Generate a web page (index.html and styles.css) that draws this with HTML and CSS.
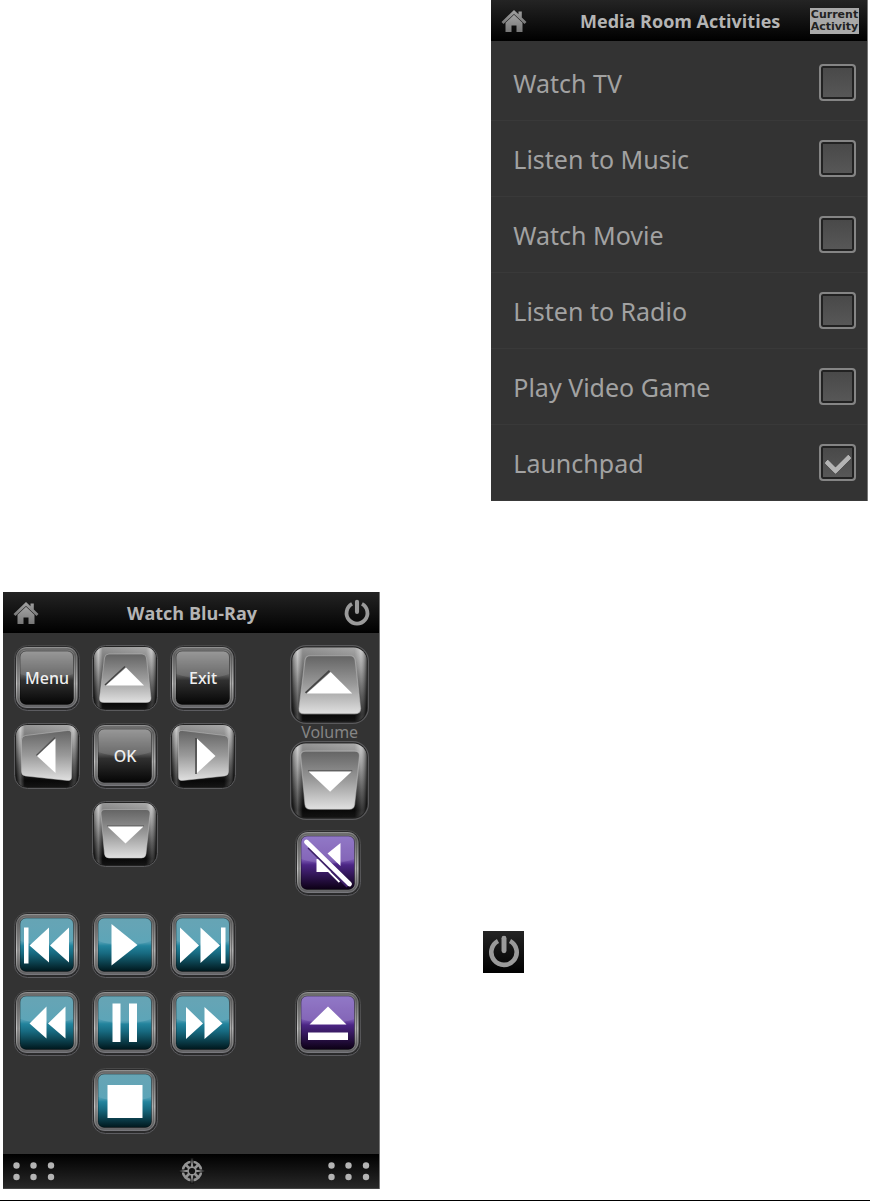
FILE: index.html
```html
<!DOCTYPE html>
<html lang="en">
<head>
    <meta charset="UTF-8">
    <meta name="viewport" content="width=device-width, initial-scale=1.0">
    <title>Media Room</title>
    <link rel="stylesheet" href="styles.css">
</head>
<body>
    <!-- shared key shapes and icons -->
    <svg class="defs" aria-hidden="true">
        <defs>
            <linearGradient id="ring" x1="0" y1="0" x2="0" y2="1">
                <stop offset="0" stop-color="#484848"/><stop offset="1" stop-color="#5c5c60"/>
            </linearGradient>
            <linearGradient id="bezel" x1="0" y1="0" x2="0" y2="1">
                <stop offset="0" stop-color="#929292"/><stop offset=".12" stop-color="#707070"/>
                <stop offset=".6" stop-color="#c4c4c4"/><stop offset=".85" stop-color="#858585"/>
                <stop offset="1" stop-color="#77777c"/>
            </linearGradient>
            <linearGradient id="black" x1="0" y1="0" x2="0" y2="1">
                <stop offset="0" stop-color="#8c8c8c"/><stop offset=".45" stop-color="#5c5c5c"/>
                <stop offset=".55" stop-color="#303030"/><stop offset="1" stop-color="#050505"/>
            </linearGradient>
            <linearGradient id="teal" x1="0" y1="0" x2="0" y2="1">
                <stop offset="0" stop-color="#5599ab"/><stop offset=".46" stop-color="#4a9ab0"/>
                <stop offset=".52" stop-color="#23849d"/><stop offset=".66" stop-color="#176a80"/>
                <stop offset="1" stop-color="#00171c"/>
            </linearGradient>
            <linearGradient id="purple" x1="0" y1="0" x2="0" y2="1">
                <stop offset="0" stop-color="#8468c0"/><stop offset=".45" stop-color="#7654b0"/>
                <stop offset=".54" stop-color="#4c2685"/><stop offset="1" stop-color="#0c0014"/>
            </linearGradient>
            <linearGradient id="base" x1="0" y1="0" x2="0" y2="1">
                <stop offset="0" stop-color="#c6c6c6"/><stop offset=".3" stop-color="#8c8c8c"/>
                <stop offset=".65" stop-color="#3c3c3c"/><stop offset=".9" stop-color="#0b0b0b"/>
                <stop offset="1" stop-color="#181818"/>
            </linearGradient>
            <linearGradient id="cap" x1="0" y1="0" x2="0" y2="1">
                <stop offset="0" stop-color="#646464"/><stop offset=".5" stop-color="#9a9a9a"/>
                <stop offset="1" stop-color="#e0e0e0"/>
            </linearGradient>
            <linearGradient id="side" x1="0" y1="0" x2="1" y2="0">
                <stop offset="0" stop-color="#000" stop-opacity=".3"/><stop offset=".07" stop-color="#fff" stop-opacity=".25"/>
                <stop offset=".14" stop-color="#000" stop-opacity=".25"/><stop offset=".84" stop-color="#000" stop-opacity=".15"/>
                <stop offset=".92" stop-color="#fff" stop-opacity=".15"/><stop offset="1" stop-color="#000" stop-opacity=".5"/>
            </linearGradient>
            <linearGradient id="home-fill" x1="0" y1="0" x2="0" y2="1">
                <stop offset="0" stop-color="#a2a2a2"/><stop offset="1" stop-color="#777"/>
            </linearGradient>

            <symbol id="frame" viewBox="0 0 66 66">
                <rect x=".5" y=".5" width="65" height="65" rx="13" fill="#2b2b2c" stroke="url(#ring)"/>
                <rect x="2" y="2" width="61.5" height="61" rx="11" fill="url(#bezel)"/>
                <rect x="4" y="4" width="57.5" height="57" rx="8" fill="none" stroke="#555" stroke-opacity=".7" stroke-width="1.5"/>
            </symbol>
            <symbol id="gloss" viewBox="0 0 66 66">
                <path d="M6 29V13q0-7 7-7h39.500q7 0 7 7v16Q33 38 6 29z" fill="#fff" opacity=".11"/>
                <rect x="6" y="6" width="53.5" height="53.5" rx="6" fill="none" stroke="#000" stroke-opacity=".4"/>
            </symbol>
            <symbol id="black-key" viewBox="0 0 66 66">
                <use href="#frame"/>
                <rect x="6" y="6" width="53.5" height="53.5" rx="6" fill="url(#black)"/>
                <use href="#gloss"/>
            </symbol>
            <symbol id="teal-key" viewBox="0 0 66 66">
                <use href="#frame"/>
                <rect x="6" y="6" width="53.5" height="53.5" rx="6" fill="url(#teal)"/>
                <use href="#gloss"/>
            </symbol>
            <symbol id="purple-key" viewBox="0 0 66 66">
                <use href="#frame"/>
                <rect x="6" y="6" width="53.5" height="53.5" rx="6" fill="url(#purple)"/>
                <use href="#gloss"/>
            </symbol>
            <symbol id="arrow-base" viewBox="0 0 66 66">
                <rect x=".5" y=".5" width="65" height="65" rx="13" fill="#222" stroke="#5a5a5c"/>
                <rect x="2" y="2" width="62" height="62" rx="11" fill="url(#base)"/>
                <rect x="2" y="2" width="62" height="62" rx="11" fill="url(#side)"/>
            </symbol>
            <symbol id="up-key" viewBox="0 0 66 66">
                <use href="#arrow-base"/>
                <path d="M17 9h33q4 0 4.500 4l4.500 40q0 4.500-5 4.500H12q-5 0-4.500-4.500L12.500 13q.5-4 4.500-4z" fill="url(#cap)" stroke="#c4c4c4" stroke-opacity=".5"/>
                <path d="M13 40L33 21.500" stroke="#444" stroke-width="1.500"/>
                <path d="M34 22.500L52 40.500H14z" fill="#fff"/>
            </symbol>
            <symbol id="down-key" viewBox="0 0 66 66">
                <use href="#arrow-base"/>
                <path d="M13 8.500h41q4.500 0 4 4.500l-4 40q-.5 4-4.500 4H17q-4 0-4.500-4L9 13q-.5-4.500 4-4.500z" fill="url(#cap)" stroke="#c4c4c4" stroke-opacity=".5"/>
                <path d="M15 25h37" stroke="#555"/>
                <path d="M15.500 25.500h36l-18 17z" fill="#fff"/>
            </symbol>
            <symbol id="left-key" viewBox="0 0 66 66">
                <use href="#arrow-base"/>
                <path d="M11.500 12.500L53.500 7.500q4-.5 4 3.500v43q0 4-4 3.500l-42-4.500q-4-.5-4-4.500V17q0-4 4-4.500z" fill="url(#cap)" stroke="#c4c4c4" stroke-opacity=".5"/>
                <path d="M22.500 32.500l18.500-18" stroke="#555" stroke-width="1.500"/>
                <path d="M23 33l18.500-17.500v34.500z" fill="#fff"/>
            </symbol>
            <symbol id="right-key" viewBox="0 0 66 66">
                <use href="#arrow-base"/>
                <path d="M12.500 7.500L54.500 12.500q4 .5 4 4.500v31.500q0 4-4 4.500l-42 4.500q-4 .5-4-3.500V11q0-4 4-3.500z" fill="url(#cap)" stroke="#c4c4c4" stroke-opacity=".5"/>
                <path d="M26 15v36" stroke="#444" stroke-width="1.500"/>
                <path d="M27 15.500l18.500 17.500L27 50z" fill="#fff"/>
            </symbol>
            <symbol id="home" viewBox="0 0 26 24">
                <path d="M13 1l4.500 4.200V2.500h3.300v6L25.500 13l-2 2L13 5 2.500 15l-2-2z" fill="url(#home-fill)"/>
                <path d="M13 5.800l8.500 8V23h-6v-6.500h-5V23h-6v-9.200z" fill="url(#home-fill)"/>
            </symbol>
            <symbol id="power" viewBox="0 0 26 26">
                <path d="M8.400 4.600a9.700 9.700 0 1 0 9.200 0" fill="none" stroke="#9a9a9a" stroke-width="3.500"/>
                <path d="M13 2.500v9.500" stroke="#9a9a9a" stroke-width="3.800" stroke-linecap="round"/>
            </symbol>
            <symbol id="dots" viewBox="0 0 42 19">
                <g fill="#b4b4b4">
                    <circle cx="3.500" cy="3.500" r="3.200"/><circle cx="20.500" cy="3.500" r="3.200"/><circle cx="38" cy="3.500" r="3.200"/>
                    <circle cx="3.500" cy="15" r="3.200"/><circle cx="20.500" cy="15" r="3.200"/><circle cx="38" cy="15" r="3.200"/>
                </g>
            </symbol>
        </defs>
    </svg>

    <main class="page">
        <section class="panel activities">
            <header class="title-bar">
                <a href="#" class="icon-link" aria-label="Home"><svg class="home"><use href="#home"/></svg></a>
                <h1>Media Room Activities</h1>
                <button class="current">Current<br>Activity</button>
            </header>
            <div class="activity-list">
                <label class="activity">Watch TV<input type="checkbox"></label>
                <label class="activity">Listen to Music<input type="checkbox"></label>
                <label class="activity">Watch Movie<input type="checkbox"></label>
                <label class="activity">Listen to Radio<input type="checkbox"></label>
                <label class="activity">Play Video Game<input type="checkbox"></label>
                <label class="activity">Launchpad<input type="checkbox" checked></label>
            </div>
        </section>

        <div class="lower">
            <section class="panel remote">
                <header class="title-bar">
                    <a href="#" class="icon-link" aria-label="Home"><svg class="home"><use href="#home"/></svg></a>
                    <h1>Watch Blu-Ray</h1>
                    <button class="power-btn" aria-label="Power"><svg class="power"><use href="#power"/></svg></button>
                </header>
                <div class="keys">
                    <div class="left-keys">
                        <div class="pad">
                            <button class="key"><svg viewBox="0 0 66 66"><use href="#black-key"/></svg><span>Menu</span></button>
                            <button class="key" aria-label="Up"><svg viewBox="0 0 66 66"><use href="#up-key"/></svg></button>
                            <button class="key"><svg viewBox="0 0 66 66"><use href="#black-key"/></svg><span>Exit</span></button>
                            <button class="key" aria-label="Left"><svg viewBox="0 0 66 66"><use href="#left-key"/></svg></button>
                            <button class="key"><svg viewBox="0 0 66 66"><use href="#black-key"/></svg><span>OK</span></button>
                            <button class="key" aria-label="Right"><svg viewBox="0 0 66 66"><use href="#right-key"/></svg></button>
                            <button class="key middle" aria-label="Down"><svg viewBox="0 0 66 66"><use href="#down-key"/></svg></button>
                        </div>
                        <div class="pad">
                            <button class="key" aria-label="Previous"><svg viewBox="0 0 66 66"><use href="#teal-key"/><path class="glyph" d="M10 15.500h4.500v36H10zM15.500 33.500l19.500-18v35zM36 33.500l19-18v35z"/></svg></button>
                            <button class="key" aria-label="Play"><svg viewBox="0 0 66 66"><use href="#teal-key"/><path class="glyph" d="M19.500 12l26 21-26 20.500z"/></svg></button>
                            <button class="key" aria-label="Next"><svg viewBox="0 0 66 66"><use href="#teal-key"/><path class="glyph" d="M10 15.500l19 18-19 17.500zM30.500 15.500l19.500 18-19.500 17.500zM51 15.500h4.500v36H51z"/></svg></button>
                            <button class="key" aria-label="Rewind"><svg viewBox="0 0 66 66"><use href="#teal-key"/><path class="glyph" d="M15.500 33.500l17-17v32zM34 33.500l17.500-17v32z"/></svg></button>
                            <button class="key" aria-label="Pause"><svg viewBox="0 0 66 66"><use href="#teal-key"/><path class="glyph" d="M20.500 13.500h8v38.500h-8zM37 13.500h8v38.500h-8z"/></svg></button>
                            <button class="key" aria-label="Fast forward"><svg viewBox="0 0 66 66"><use href="#teal-key"/><path class="glyph" d="M16 17l17 16.500-17 15.500zM34.500 17l18 16.500-18 15.500z"/></svg></button>
                            <button class="key middle" aria-label="Stop"><svg viewBox="0 0 66 66"><use href="#teal-key"/><path class="glyph" d="M15.500 17h35v33h-35z"/></svg></button>
                        </div>
                    </div>
                    <div class="right-keys">
                        <button class="key big" aria-label="Volume up"><svg viewBox="0 0 66 66"><use href="#up-key"/></svg></button>
                        <span class="volume">Volume</span>
                        <button class="key big" aria-label="Volume down"><svg viewBox="0 0 66 66"><use href="#down-key"/></svg></button>
                        <button class="key mute" aria-label="Mute"><svg viewBox="0 0 66 66"><use href="#purple-key"/><path class="glyph" d="M45.500 13v23L32.500 23.500zM21.500 29h4l13.500 13H21.500z"/><path d="M33 40.500l11.500 11.500" stroke="#fff" stroke-width="2"/><path d="M14 17l39 39" stroke="#3d2068" stroke-width="4"/><path d="M11.500 12l43 42" stroke="#fff" stroke-width="4.800" stroke-linecap="round"/></svg></button>
                        <button class="key eject" aria-label="Eject"><svg viewBox="0 0 66 66"><use href="#purple-key"/><path class="glyph" d="M33 16.500l18.500 18h-37zM13 42.500h40v7.500H13z"/></svg></button>
                    </div>
                </div>
                <footer class="bottom-bar">
                    <svg class="dots"><use href="#dots"/></svg>
                    <svg class="compass" viewBox="0 0 26 26" fill="none" stroke="#949494">
                        <circle cx="13" cy="13" r="9.200" stroke-width="2.500"/>
                        <circle cx="13" cy="13" r="4" stroke-width="1.800"/>
                        <path d="M7 7l3.500 3.500M19 7l-3.500 3.500M7 19l3.500-3.500M19 19l-3.500-3.500" stroke-width="2.500"/>
                        <path d="M13 0v9M13 17v9M0 13h9M17 13h9" stroke="#111" stroke-width="3"/>
                        <path d="M13 0l1.300 9h-2.600zM13 26l1.300-9h-2.600zM0 13l9-1.300v2.600zM26 13l-9-1.300v2.600z" fill="#949494" stroke="none"/>
                    </svg>
                    <svg class="dots"><use href="#dots"/></svg>
                </footer>
            </section>
            <button class="power-tile" aria-label="Power"><svg class="power"><use href="#power"/></svg></button>
        </div>
    </main>
</body>
</html>
```
FILE: styles.css
```css
* {
    box-sizing: border-box;
}
body {
    margin: 0;
    background-color: #fff;
    font-family: "Noto Sans", "Open Sans", sans-serif;
}
button {
    padding: 0;
    border: none;
    background: none;
    font-family: inherit;
    cursor: pointer;
}
svg {
    display: block;
}
.defs {
    position: absolute;
    width: 0;
    height: 0;
}
.page {
    display: flex;
    flex-direction: column;
    gap: 92px;
    padding-bottom: 11px;
    border-bottom: 1px solid #000;
}
.panel {
    background-color: #333;
    border-right: 1px solid #777;
}
.activities {
    width: 43.3%;
    margin-left: auto;
    margin-right: 2px;
}
.title-bar {
    display: grid;
    grid-template-columns: 1fr auto 1fr;
    align-items: center;
    height: 41px;
    padding: 0 8px 0 10px;
    background: linear-gradient(#242424, #000);
}
.title-bar h1 {
    margin: 0;
    color: #b4b4b4;
    font-family: "Open Sans", sans-serif;
    font-size: 18px;
    font-weight: 700;
}
.title-bar button {
    justify-self: end;
}
.home {
    width: 26px;
    height: 24px;
}
.power {
    width: 28px;
    height: 28px;
}
.current {
    width: 49px;
    height: 26px;
    background-color: #a8a8a8;
    color: #222;
    font-family: "DejaVu Sans", sans-serif;
    font-size: 11px;
    font-weight: bold;
    line-height: 12px;
    display: flex;
    align-items: center;
    justify-content: center;
}
.activity-list {
    padding-top: 4px;
}
.activity {
    display: flex;
    align-items: center;
    justify-content: space-between;
    height: 76px;
    padding: 0 11px 0 22px;
    border-bottom: 1px solid #393939;
    color: #a2a2a2;
    font-size: 25px;
}
.activity input {
    appearance: none;
    display: grid;
    place-items: center;
    width: 37px;
    height: 37px;
    margin: 0;
    border: 2px solid #858585;
    border-radius: 4px;
    background: linear-gradient(#484848, #585858);
    box-shadow: inset 0 0 0 2px #222;
}
.activity input:checked::before {
    content: "";
    width: 11px;
    height: 18px;
    margin-bottom: 5px;
    border-right: 5px solid #b4b4b4;
    border-bottom: 5px solid #b4b4b4;
    border-radius: 2px;
    transform: rotate(45deg);
}
.lower {
    display: flex;
    align-items: flex-start;
    gap: 103px;
    padding-left: 3px;
    margin-top: -1px;
}
.remote {
    width: 43.5%;
}
.keys {
    display: flex;
    justify-content: space-between;
    padding: 12px 10px 20px 11px;
}
.left-keys {
    display: flex;
    flex-direction: column;
    gap: 45px;
}
.pad {
    display: grid;
    grid-template-columns: repeat(3, 66px);
    gap: 12px;
}
.key {
    display: grid;
    place-items: center;
    width: 66px;
    height: 66px;
    color: #f0f0f0;
    font-size: 16px;
    font-weight: 500;
}
.key svg,
.key span {
    grid-area: 1 / 1;
}
.key svg {
    width: 100%;
    height: 100%;
}
.middle {
    grid-column: 2;
}
.glyph {
    fill: #fff;
}
.right-keys {
    display: flex;
    flex-direction: column;
    align-items: center;
}
.big {
    width: 79px;
    height: 79px;
}
.volume {
    color: #858585;
    font-size: 16px;
    line-height: 17px;
}
.mute,
.eject {
    margin-right: 3px;
}
.mute {
    margin-top: 10px;
}
.eject {
    margin-top: auto;
    margin-bottom: 78px;
}
.bottom-bar {
    display: flex;
    align-items: center;
    justify-content: space-between;
    height: 35px;
    padding: 0 9px 0 10px;
    border-bottom: 1px solid #444;
    background: linear-gradient(#000, #282828);
}
.dots {
    width: 42px;
    height: 19px;
}
.compass {
    width: 26px;
    height: 26px;
}
.power-tile {
    display: grid;
    place-items: center;
    width: 41px;
    height: 42px;
    margin-top: 339px;
    background: linear-gradient(#242424, #000);
}
.power-tile .power {
    width: 34px;
    height: 34px;
}
```
